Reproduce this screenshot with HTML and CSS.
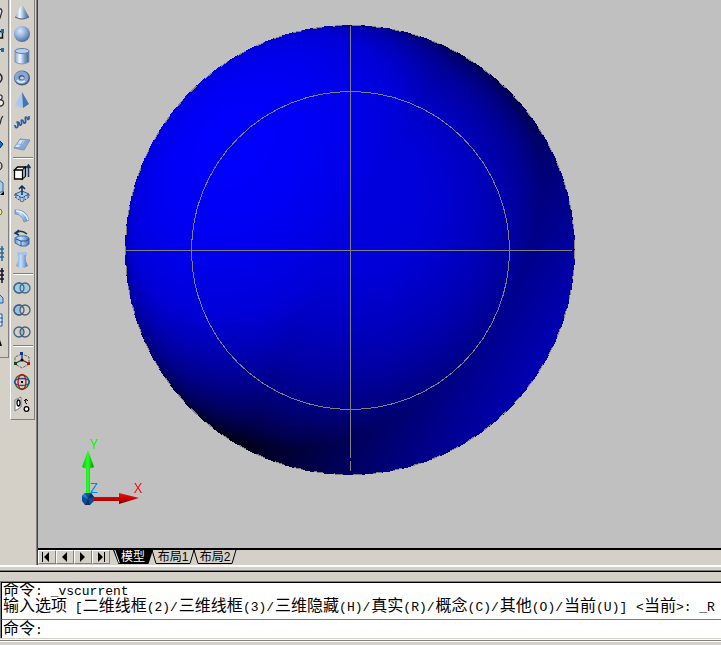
FILE: index.html
```html
<!DOCTYPE html>
<html lang="zh-CN">
<head>
    <meta charset="UTF-8">
    <meta name="viewport" content="width=device-width, initial-scale=1.0">
    <title>模型</title>
    <link rel="stylesheet" href="styles.css">
</head>
<body>
    <svg class="defs" aria-hidden="true">
        <defs>
            <linearGradient id="metal"><stop offset="0" stop-color="#8aa5c8"/><stop offset=".35" stop-color="#f4f9ff"/><stop offset=".65" stop-color="#86a6d0"/><stop offset="1" stop-color="#3f5f8e"/></linearGradient>
            <linearGradient id="glass"><stop offset="0" stop-color="#6d9ad2"/><stop offset=".4" stop-color="#c4e0ff"/><stop offset="1" stop-color="#4a76b2"/></linearGradient>
            <radialGradient id="ball" cx=".38" cy=".32" r=".7"><stop offset="0" stop-color="#dbe8fa"/><stop offset=".55" stop-color="#8caad8"/><stop offset="1" stop-color="#4a6c9e"/></radialGradient>
            <linearGradient id="green"><stop offset="0" stop-color="#00c800"/><stop offset=".5" stop-color="#28ff28"/><stop offset="1" stop-color="#008c00"/></linearGradient>
            <linearGradient id="red" x2="0" y2="1"><stop offset="0" stop-color="#d81818"/><stop offset=".4" stop-color="#e00000"/><stop offset="1" stop-color="#700000"/></linearGradient>
        </defs>
    </svg>

    <main class="workspace">
        <div class="dock">
            <!-- Draw toolbar, partly off screen -->
            <div class="toolbar draw">
                <button aria-label="圆弧"><svg viewBox="0 0 8 22"><path d="M-2 8h3l1 2-2 7h-3" fill="#e8eef8" stroke="#333" stroke-width="1.3"/></svg></button>
                <button aria-label="矩形"><svg viewBox="0 0 8 22"><path d="M0 8.500h3M2.500 9v6H0" fill="none" stroke="#111" stroke-width="1.500"/><path d="M1 6h3v4H1z" fill="#0070c8"/></svg></button>
                <button aria-label="直线"><svg viewBox="0 0 8 22"><path d="M0 4.500h2" stroke="#333"/><path d="M1 3h3v4H1z" fill="#0070c8"/></svg></button>
                <button aria-label="圆"><svg viewBox="0 0 8 22"><circle cx="-3" cy="11" r="5" fill="none" stroke="#223" stroke-width="1.500"/></svg></button>
                <button aria-label="修订云线"><svg viewBox="0 0 8 22"><path d="M-1 6c4-1 4 4 1 5 4-1 5 5 1 6h-2" fill="#eee" stroke="#333" stroke-width="1.300"/></svg></button>
                <button aria-label="样条曲线"><svg viewBox="0 0 8 22"><path d="M-1 14c2 0 1-7 4-9" fill="none" stroke="#333" stroke-width="1.300"/></svg></button>
                <button aria-label="椭圆"><svg viewBox="0 0 8 22"><path d="M-4 11l4-3 3 3-3 4z" fill="#0070c8" stroke="#223"/></svg></button>
                <button aria-label="椭圆弧"><svg viewBox="0 0 8 22"><circle cx="-2" cy="11" r="4" fill="none" stroke="#333" stroke-width="1.300"/></svg></button>
                <button aria-label="插入块"><svg viewBox="0 0 8 22"><path d="M-1 3l4 3v8l-4 2z" fill="#a9cde8" stroke="#356890"/><path d="M4 18h-4l4-4z" fill="#000"/></svg></button>
                <button aria-label="点"><svg viewBox="0 0 8 22"><circle cx="-1" cy="13" r="3" fill="#e8e89a" stroke="#707020"/></svg></button>
                <button aria-label="创建块"></button>
                <button aria-label="图案填充"><svg viewBox="0 0 8 22"><path d="M0 6h4M0 10h4M0 14h4M2 3v15" stroke="#26699c" stroke-width="1.500"/></svg></button>
                <button aria-label="渐变色"><svg viewBox="0 0 8 22"><path d="M0 6h4M0 10h4M0 14h4M2 3v15" stroke="#112" stroke-width="1.500"/></svg></button>
                <button aria-label="面域"><svg viewBox="0 0 8 22"><path d="M-1 7l4 4v5h-4z" fill="#a8c8ec" stroke="#2b5a96"/></svg></button>
                <button aria-label="表格"><svg viewBox="0 0 8 22"><path d="M-1 5h3v12h-3M0 9h3M0 13h3" fill="#d8e8fa" stroke="#2b5a96"/></svg></button>
                <button aria-label="多行文字"><svg viewBox="0 0 8 22"><path d="M0 9l2 6H0z"/></svg></button>
            </div>

            <!-- Modeling toolbar -->
            <div class="toolbar modeling">
                <button aria-label="圆锥体"><svg viewBox="0 0 18 18"><path d="M9 1L2 14q7 4 14 0z" fill="url(#metal)"/><path d="M2 14q7 4 14 0" fill="none" stroke="#4c5f78"/></svg></button>
                <button aria-label="球体"><svg viewBox="0 0 18 18"><circle cx="9" cy="9" r="8" fill="url(#ball)"/></svg></button>
                <button aria-label="圆柱体"><svg viewBox="0 0 18 18"><path d="M2 4v11q7 4 14 0V4z" fill="url(#metal)" stroke="#7f97b8"/><ellipse cx="9" cy="4" rx="7" ry="2.500" fill="#b9d0ed" stroke="#5c7fae"/></svg></button>
                <button aria-label="圆环体"><svg viewBox="0 0 18 18"><ellipse cx="9" cy="9" rx="5" ry="4.500" fill="none" stroke="#3e5f8c" stroke-width="6"/><ellipse cx="8.500" cy="8.500" rx="5" ry="4.500" fill="none" stroke="#86a6d4" stroke-width="4"/><path d="M4 11q3 4 8 1" fill="none" stroke="#e2efff" stroke-width="1.500"/></svg></button>
                <button aria-label="棱锥面"><svg viewBox="0 0 18 18"><path d="M9 1L2 14l8 3z" fill="#a5c8f4"/><path d="M9 1l1 16 6-4z" fill="#4374b5"/></svg></button>
                <button aria-label="螺旋"><svg viewBox="0 0 18 18"><path d="M2 12c0 4 3 3 3 0s-2-3 0-3 1 4 3 3-1-5 1-5 1 4 3 3-1-6 1-6 1 4 3 2V3" fill="none" stroke="#315f9b" stroke-width="1.700"/></svg></button>
                <button aria-label="平面曲面"><svg viewBox="0 0 18 18"><path d="M7 4l10 1-6 10-10-2z" fill="#86a8d4" stroke="#7593bd"/><path d="M7 5h5l-5 7-5 0z" fill="#d2e4fa"/><path d="M4 9l10 1M11 4l-5 9" stroke="#8eacd4"/></svg></button>
                <hr>
                <button aria-label="拉伸"><svg viewBox="0 0 18 18"><path d="M1.500 7l3-3h8l-3 3zM1.500 7h8v9h-8zM9.500 7l3-3v9l-3 3z" fill="#fff" stroke="#000" stroke-width="1.300"/><path d="M10 7l2-2v8l-2 2z" fill="#8ba5c7"/><path d="M15.500 14V3M13.500 5l2-3 2 3" fill="none" stroke="#16345e" stroke-width="1.500"/></svg></button>
                <button aria-label="按住并拖动"><svg viewBox="0 0 18 18"><path d="M2 9l7-3 7 3-7 4z" fill="#a8ccf0" stroke="#376088"/><path d="M2 9v3l7 5 7-5V9l-7 4z" fill="#7a9ec9" stroke="#345070" stroke-dasharray="2 1"/><path d="M9 10V2M6 4l3-3 3 3" fill="none" stroke="#102e54" stroke-width="1.500"/><path d="M5 11v3M9 13v3M13 11v3" stroke="#eef"/></svg></button>
                <button aria-label="扫掠"><svg viewBox="0 0 18 18"><path d="M2 3q11-1 14 10l-5 2Q9 7 2 7z" fill="url(#glass)" stroke="#7896be"/><path d="M3 4q9 0 12 9" fill="none" stroke="#edf6ff" stroke-width="1.500"/></svg></button>
                <button aria-label="旋转"><svg viewBox="0 0 18 18"><path d="M2 9l3-2h8l3 2v6l-3 2H8l-6-3z" fill="url(#glass)" stroke="#356aab"/><path d="M3 10l5 2h5l3-2M8 12v5" fill="none" stroke="#245087"/><path d="M3 4q5-4 11 1M6 1L2 4l4 2" fill="none" stroke="#15365d" stroke-width="1.500"/></svg></button>
                <button aria-label="放样"><svg viewBox="0 0 18 18"><path d="M4 2q5-2 10 0-3 6 1 13-6 4-12 0Q7 8 4 2z" fill="url(#glass)"/><ellipse cx="9" cy="2.500" rx="5" ry="1.500" fill="#a4c4ec"/></svg></button>
                <hr>
                <button aria-label="并集"><svg viewBox="0 0 18 18"><g fill="#a0cce4" stroke="#426a86" stroke-width="1.300"><circle cx="6" cy="9" r="5"/><circle cx="12" cy="9" r="5"/><circle cx="6" cy="9" r="5" fill="none"/></g></svg></button>
                <button aria-label="差集"><svg viewBox="0 0 18 18"><g fill="#8fc4e0" stroke="#465e7c" stroke-width="1.300"><circle cx="6" cy="9" r="5"/><circle cx="12" cy="9" r="5" fill="#d4d0c8"/><circle cx="6" cy="9" r="5" fill="none"/></g></svg></button>
                <button aria-label="交集"><svg viewBox="0 0 18 18"><path d="M9 5q4 4 0 8-4-4 0-8" fill="#80c0e0"/><g fill="none" stroke="#465e7c" stroke-width="1.300"><circle cx="6" cy="9" r="5"/><circle cx="12" cy="9" r="5"/></g></svg></button>
                <hr>
                <button aria-label="三维移动"><svg viewBox="0 0 18 18"><path d="M9 3L2 6v7l7 4 7-4V6z" fill="none" stroke="#666" stroke-dasharray="3 1"/><path d="M9 9V3M9 9l6 3M9 9l-6 3" stroke="#333" stroke-width="1.300"/><path d="M7 1h3v3H7z" fill="#0f368d"/><path d="M14 11h3v3h-3z" fill="#d80000"/><path d="M1 11h3v3H1z" fill="#064a20"/><circle cx="9" cy="9" r="1.500"/></svg></button>
                <button aria-label="三维旋转"><svg viewBox="0 0 18 18"><g fill="none" stroke-width="1.300"><circle cx="9" cy="9" r="7" stroke="#008030"/><ellipse cx="9" cy="9" rx="7.500" ry="3.500" stroke="#1254a0"/><ellipse cx="9" cy="9" rx="4" ry="7.500" stroke="#e00000"/></g><path d="M8 8h2v2H8z"/></svg></button>
                <button aria-label="三维对齐"><svg viewBox="0 0 18 18"><path d="M2 5l6-3v10l-6 4z" fill="#fff" stroke="#777"/><ellipse cx="5.500" cy="8" rx="1.500" ry="3" fill="none" stroke="#000" stroke-width="1.300"/><circle cx="13.500" cy="14" r="2.300" fill="#fff" stroke="#000" stroke-width="1.300"/><path d="M14 9q-3-1-1-4M11 6l2-2 2 2" fill="none" stroke="#000"/></svg></button>
            </div>
        </div>

        <section class="drawing">
            <div class="viewport">
                <canvas id="sphere" width="450" height="450"></canvas>
                <svg class="scene" viewBox="0 0 683 548" preserveAspectRatio="xMinYMin meet">
                    <!-- Isolines -->
                    <g class="isolines">
                        <circle cx="312" cy="250" r="224.500" stroke-dasharray="9 11"/>
                        <circle cx="312.500" cy="250.500" r="159"/>
                        <path d="M88 250.500h446M312.500 26v432M312.500 461v10"/>
                    </g>
                    <!-- UCS icon -->
                    <path d="M48 467h4v27h-4zM50 450l6 17q-6 3-12 0z" fill="url(#green)"/>
                    <path d="M54 497h27v4H54zM81 493l20 5-20 6z" fill="url(#red)"/>
                    <path d="M47 493h6l3 4v4l-4 4h-5l-3-4v-5z" fill="#0a4f94"/>
                    <path d="M47 493l3 6-6-3z" fill="#1680e0"/><path d="M50 499l3-6 3 4zM50 499l2 6h-5z" fill="#052c5c"/>
                    <g class="axis">
                        <text x="56" y="449" fill="#00ff00" text-anchor="middle">Y</text>
                        <text x="56" y="493" fill="#0088f0" text-anchor="middle">Z</text>
                        <text x="100" y="493" fill="#ff0000" text-anchor="middle">X</text>
                    </g>
                </svg>
            </div>

            <nav class="layouts">
                <button class="step" aria-label="第一个"><svg viewBox="0 0 16 12"><path d="M3 1h1v10H3zM10 1v10L5 6z"/></svg></button>
                <button class="step" aria-label="上一个"><svg viewBox="0 0 16 12"><path d="M10 1v10L5 6z"/></svg></button>
                <button class="step" aria-label="下一个"><svg viewBox="0 0 16 12"><path d="M5 1v10l5-5z"/></svg></button>
                <button class="step" aria-label="最后一个"><svg viewBox="0 0 16 12"><path d="M5 1v10l5-5zM11 1h1v10h-1z"/></svg></button>
                <button class="tab active"><svg viewBox="0 0 44 14" preserveAspectRatio="none"><path d="M0 0h44l-5 14H6z"/><path d="M2 0l5 13" stroke="#fff"/></svg><span>模型</span></button>
                <button class="tab"><svg viewBox="0 0 44 14" preserveAspectRatio="none"><path d="M1 0l4 13.500h34L43 0"/></svg><span>布局1</span></button>
                <button class="tab"><svg viewBox="0 0 44 14" preserveAspectRatio="none"><path d="M1 0l4 13.500h34L43 0"/></svg><span>布局2</span></button>
            </nav>
        </section>
    </main>

    <div class="splitter"></div>

    <section class="command">
        <div class="history">
            <p>命令<span>: _vscurrent</span></p>
            <p>输入选项<span> [</span>二维线框<span class="key">(2)/</span>三维线框<span class="key">(3)/</span>三维隐藏<span class="key">(H)/</span>真实<span class="key">(R)/</span>概念<span class="key">(C)/</span>其他<span class="key">(O)/</span>当前<span class="key">(U)]</span><span> &lt;</span>当前<span>&gt;: _R</span></p>
        </div>
        <div class="prompt">
            <label for="cmd">命令<span>:</span></label>
            <input type="text" id="cmd" autocomplete="off">
        </div>
    </section>
    <footer class="status"></footer>

    <script src="sphere.js"></script>
</body>
</html>
```
FILE: styles.css
```css
* {
    box-sizing: border-box;
}

body {
    display: flex;
    flex-direction: column;
    min-height: 100vh;
    margin: 0;
    background-color: #d4d0c8;
    color: #000;
    font-family: "Liberation Sans", "Noto Sans CJK SC", sans-serif;
    font-size: 12px;
}

button {
    display: block;
    padding: 0;
    border: none;
    background: none;
    color: inherit;
    font: inherit;
}

.defs {
    position: absolute;
    width: 0;
    height: 0;
}

.workspace {
    display: flex;
    flex: 1;
}

/* Toolbars */
.dock {
    display: flex;
    align-items: flex-start;
    gap: 1px;
    padding-right: 1px;
    border-right: 1px solid #808080;
}

.toolbar {
    border-right: 1px solid #808080;
    border-bottom: 1px solid #808080;
    padding: 1px 0 4px;
}

.toolbar button {
    display: flex;
    align-items: center;
    justify-content: center;
    width: 100%;
    height: 22px;
}

.draw {
    width: 9px;
}

.draw svg {
    width: 8px;
    height: 22px;
}

.modeling {
    width: 25px;
    padding-right: 1px;
    border-left: 1px solid #fff;
}

.modeling svg {
    width: 18px;
    height: 18px;
}

.toolbar hr {
    margin: 2px 0 2px 2px;
    border: none;
    border-top: 1px solid #808080;
    border-bottom: 1px solid #fff;
}

/* Drawing area */
.drawing {
    display: flex;
    flex: 1;
    flex-direction: column;
    min-width: 0;
    border-left: 1px solid #404040;
}

.viewport {
    position: relative;
    flex: 1;
    overflow: hidden;
    background-color: #c0c0c0;
    border-bottom: 2px solid #000;
}

#sphere {
    position: absolute;
    left: 87px;
    top: 25px;
}

.scene {
    position: absolute;
    left: 0;
    top: 0;
    width: 100%;
}

.isolines {
    fill: none;
    stroke: #808080;
    shape-rendering: crispEdges;
}

.axis {
    font-family: "Open Sans", sans-serif;
    font-size: 14px;
}

/* Layout tabs */
.layouts {
    display: flex;
    height: 15px;
}

.step {
    width: 18px;
    height: 14px;
    border: 1px solid #808080;
    border-top-color: #fff;
    border-left-color: #fff;
}

.step svg {
    display: block;
    width: 100%;
    height: 100%;
}

.tab {
    position: relative;
    width: 44px;
    height: 14px;
    margin-right: -2px;
    line-height: 14px;
}

.tab.active {
    width: 40px;
    margin-left: 3px;
    color: #fff;
}

.tab svg {
    position: absolute;
    left: 0;
    top: 0;
    width: 100%;
    height: 100%;
    fill: none;
    stroke: #000;
}

.tab.active svg {
    fill: #000;
    stroke: none;
}

.tab span {
    position: relative;
}

/* Command window */
.splitter {
    height: 16px;
    border-top: 2px solid #fff;
    border-bottom: 9px solid #d4d0c8;
    background: linear-gradient(#d4d0c8 3px, #808080 3px, #808080 4px, #000 4px);
}

.command {
    border-top: 1px solid #808080;
    border-left: 1px solid #808080;
    background-color: #fff;
    font-family: "Liberation Mono", "Noto Sans CJK SC", monospace;
    font-size: 16px;
    line-height: 16px;
}

.command span {
    font-size: 13px;
    white-space: pre;
}

.history {
    height: 38px;
    padding: 0 1px;
    overflow: hidden;
    border-top: 1px solid #000;
    border-bottom: 1px solid #808080;
    border-left: 1px solid #000;
    white-space: nowrap;
}

.history p {
    height: 16px;
    margin: 0;
}

.command .key {
    padding-right: 1px;
}

.prompt {
    display: flex;
    height: 18px;
    padding: 2px 1px 0;
    border-left: 1px solid #000;
}

.prompt input {
    flex: 1;
    min-width: 0;
    padding: 0 4px;
    border: none;
    outline: none;
    font: inherit;
}

.status {
    height: 7px;
    border-top: 1px solid #d4d0c8;
    background: linear-gradient(#fff 1px, #808080 1px, #808080 2px, #fff 2px, #fff 3px, #d4d0c8 3px);
}
```
FILE: sphere.js
```js
// Shaded sphere: key light from the upper left, fill light from the lower right
const canvas = document.getElementById('sphere');
const ctx = canvas.getContext('2d');
const size = canvas.width;
const radius = size / 2;
const image = ctx.createImageData(size, size);

const ambient = 24;
const key = [-142, -126, 190];
const fill = [136, 72, 8];

function light(dir, x, y, z) {
    return Math.max(0, dir[0] * x + dir[1] * y + dir[2] * z);
}

for (let row = 0; row < size; row++) {
    for (let col = 0; col < size; col++) {
        const x = (col + 0.5 - radius) / radius;
        const y = (row + 0.5 - radius) / radius;
        const d = x * x + y * y;
        if (d > 1) continue;
        const z = Math.sqrt(1 - d);
        const i = (row * size + col) * 4;
        let blue = ambient + light(key, x, y, z) + light(fill, x, y, z);
        // soften the highlight so that it does not clip
        if (blue > 215) blue = 215 + (blue - 215) * 0.5;
        image.data[i + 2] = blue;
        image.data[i + 3] = 255;
    }
}

ctx.putImageData(image, 0, 0);
```
